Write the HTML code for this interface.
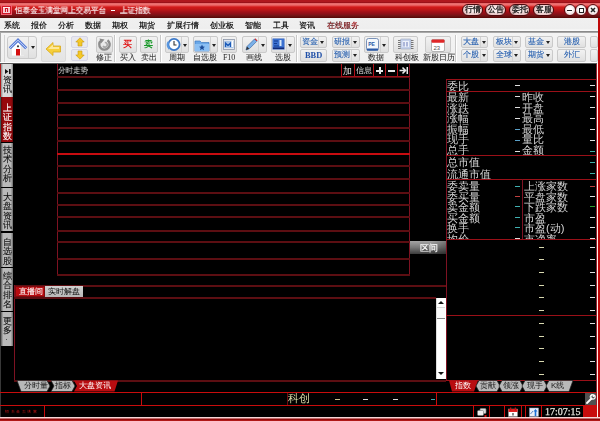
<!DOCTYPE html>
<html><head><meta charset="utf-8">
<style>
*{margin:0;padding:0;box-sizing:border-box}
html,body{width:600px;height:421px;overflow:hidden;background:#000;font-family:"Liberation Sans",sans-serif}
.t,.sbt,.rt,.lbl,.sb,.m,.pill{will-change:transform}
.a{position:absolute}
.t{position:absolute;white-space:nowrap;line-height:1}
/* title */
#title{left:0;top:0;width:600px;height:18px;background:linear-gradient(#b0181e 0,#b0181e 2px,#961018 2.6px,#f07474 3.6px,#ee6e6e 5px,#d41a1a 7px,#c41818 9px,#a01018 12px,#8a1018 14px,#6c1414 16px,#5a0808 17.4px,#5a0808 18px)}
#menu{left:0;top:18px;width:600px;height:13px;background:linear-gradient(#f0f0f0 0,#eeeeee 11px,#fafafa 12px)}
#tool{left:0;top:31px;width:600px;height:33px;background:linear-gradient(#8a8a8a 0,#8a8a8a 1px,#a8a8a8 1px,#a8a8a8 2px,#f4f4f4 2px,#efefef 100%)}
.m{font-size:7.6px;color:#000;top:22px;-webkit-text-stroke:0.15px #000}
.pill{position:absolute;top:4px;height:12px;width:21px;border-radius:6px;background:radial-gradient(ellipse at 50% 45%,#fbeeee 25%,#d8a4a4);border:1px solid #4a080c;font-size:8px;color:#111;text-align:center;line-height:10px;-webkit-text-stroke:0.25px #111}
.wc{position:absolute;top:4px;width:12px;height:12px;border-radius:50%;background:radial-gradient(circle at 50% 45%,#fff 30%,#e0b8b8);border:1px solid #5a0a0e}
.btn{position:absolute;background:linear-gradient(#f2f2f2,#e0e0e0);border:1px solid #cacaca;border-radius:2px}
.lbl{position:absolute;font-size:7.6px;color:#2c2c2c;white-space:nowrap;line-height:1;-webkit-text-stroke:0.05px #2c2c2c}
.sb{position:absolute;font-size:7.8px;color:#2a62b0;white-space:nowrap;line-height:1;-webkit-text-stroke:0.12px #2a62b0}
.dd{position:absolute;width:0;height:0;border-left:2.5px solid transparent;border-right:2.5px solid transparent;border-top:3px solid #222}
.sep{position:absolute;top:35px;width:1px;height:27px;background:#c8c8c8;box-shadow:1px 0 0 #fff}
/* sidebar */
.sbt{position:absolute;left:2px;width:11px;font-size:9.2px;line-height:9.3px;text-align:center;-webkit-text-stroke:0.1px currentColor}
.tab{position:absolute;left:1px;width:12px;background:linear-gradient(90deg,#9a9a9a,#cfcfcf 20%,#c8c8c8 80%,#8a8a8a);font-size:8.6px;color:#111;text-align:center;line-height:9.6px;padding-top:3px}
.hl{position:absolute;height:2px;background:#5c0e12}
.vl{position:absolute;width:1px;background:#7e1222}
.rt{position:absolute;font-size:11.2px;color:#d4d4d4;white-space:nowrap;line-height:10.5px}
.dash{position:absolute;width:5px;height:1px;background:#e0e0e0}
</style></head><body>
<!-- TITLE BAR -->
<div id="title" class="a">
  <div class="a" style="left:1px;top:5px;width:11px;height:10px;background:#d01828;border:1px solid #f06070"></div>
<div class="a" style="left:3px;top:7px;width:7px;height:1px;background:#fff0f0"></div>
<div class="a" style="left:3px;top:8px;width:2px;height:5px;background:#f8c8d0"></div>
<div class="a" style="left:6px;top:9px;width:1px;height:4px;background:#f8d0d8"></div>
<div class="a" style="left:8px;top:8px;width:2px;height:5px;background:#f8c0c8"></div>
<div class="a" style="left:3px;top:12px;width:7px;height:1px;background:#f8d0d8"></div>
  
  <div class="t" style="left:15px;top:7px;font-size:8px;color:#fff;transform:scaleX(0.95);transform-origin:0 0;-webkit-text-stroke:0.1px #fff">恒泰金玉满堂网上交易平台</div>
<div class="a" style="left:111px;top:10px;width:4px;height:1px;background:#fff"></div>
<div class="t" style="left:120px;top:7px;font-size:8px;color:#fff;transform:scaleX(0.95);transform-origin:0 0;-webkit-text-stroke:0.1px #fff">上证指数</div>
  <div class="pill" style="left:461.5px">行情</div>
  <div class="pill" style="left:485px">公告</div>
  <div class="pill" style="left:509px">委托</div>
  <div class="pill" style="left:533px">客服</div>
  <div class="wc" style="left:563.5px"><div class="a" style="left:2.5px;top:4.5px;width:5px;height:1.6px;background:#222"></div></div>
  <div class="wc" style="left:575px"><div class="a" style="left:2.5px;top:3px;width:5px;height:4.5px;border:1.2px solid #222;border-top-width:1.6px"></div></div>
  <div class="wc" style="left:586.5px"><svg class="a" style="left:1px;top:1px" width="8" height="8" viewBox="0 0 8 8"><path d="M2 2 L6 6 M6 2 L2 6" stroke="#222" stroke-width="1.5"/></svg></div>
</div>
<!-- MENU -->
<div id="menu" class="a"></div>
<div class="t m" style="left:4px">系统</div>
<div class="t m" style="left:31px">报价</div>
<div class="t m" style="left:58px">分析</div>
<div class="t m" style="left:85px">数据</div>
<div class="t m" style="left:112px">期权</div>
<div class="t m" style="left:139px">期货</div>
<div class="t m" style="left:167px">扩展行情</div>
<div class="t m" style="left:210px">创业板</div>
<div class="t m" style="left:245px">智能</div>
<div class="t m" style="left:273px">工具</div>
<div class="t m" style="left:299px">资讯</div>
<div class="t m" style="left:327px;color:#c0181e">在线服务</div>
<!-- TOOLBAR -->
<div id="tool" class="a"></div>
<div class="a" style="left:0;top:32px;width:1px;height:31px;background:#a8a8a8"></div>
<div class="a" style="left:0;top:62px;width:597px;height:1px;background:#fdfdfd"></div>
<div class="a" style="left:0;top:63px;width:597px;height:1px;background:#585858"></div>
<div class="a" style="left:4px;top:35px;width:1px;height:27px;background:#d4d4d4"></div>

<!-- home -->
<div class="btn" style="left:7px;top:36px;width:30px;height:23px;border-radius:3px"></div>
<div class="a" style="left:28px;top:37px;width:1px;height:21px;background:#cfcfcf"></div>
<svg class="a" style="left:8px;top:37px" width="20" height="20" viewBox="0 0 20 20">
 <path d="M4 10.5 L10 5.2 L16 10.5 V18.5 H4 Z" fill="#fff"/>
 <path d="M12.5 7.5 L16 10.5 V18.5 H13 Z" fill="#e4e4e4"/>
 <path d="M1.8 11.2 L10 3.2 L18.2 11.2" fill="none" stroke="#5a7ed8" stroke-width="3" stroke-linejoin="miter"/>
 <path d="M1.8 11.2 L10 3.2 L18.2 11.2" fill="none" stroke="#c4d4f8" stroke-width="1"/>
 <rect x="8" y="12" width="4" height="6.5" fill="#d41010"/>
 <circle cx="10" cy="9.3" r="1.1" fill="#3a3a3a"/>
</svg>
<div class="dd" style="left:30.5px;top:46px"></div>
<!-- back -->
<div class="btn" style="left:41px;top:36px;width:25px;height:26px;border-color:#dadada;background:linear-gradient(#ececec,#e4e4e4)"></div>
<svg class="a" style="left:45px;top:41px" width="17" height="16" viewBox="0 0 17 16">
 <path d="M1 8 L8 1.5 V5 H15.5 V11 H8 V14.5 Z" fill="#f6cf3a" stroke="#d8a81a" stroke-width="0.8" stroke-linejoin="round"/>
 <path d="M3 8 L8 3.5 V6 H14 V8 Z" fill="#fde89a"/>
</svg>
<!-- up/down -->
<div class="btn" style="left:71px;top:36px;width:17px;height:12px;border-color:#d6d6e6;background:#e8e8ee"></div>
<svg class="a" style="left:75px;top:37px" width="10" height="10" viewBox="0 0 10 10">
 <path d="M5 0.8 L9.2 5 H7 V9 H3 V5 H0.8 Z" fill="#f4c828" stroke="#c89810" stroke-width="0.6"/>
</svg>
<div class="btn" style="left:71px;top:49px;width:17px;height:12px;border-color:#d6d6e6;background:#e8e8ee"></div>
<svg class="a" style="left:75px;top:50px" width="10" height="10" viewBox="0 0 10 10">
 <path d="M5 9.2 L9.2 5 H7 V1 H3 V5 H0.8 Z" fill="#f4c828" stroke="#c89810" stroke-width="0.6"/>
</svg>
<!-- xiuzheng -->
<div class="btn" style="left:96px;top:36px;width:17px;height:17px"></div>
<svg class="a" style="left:97px;top:37px" width="15" height="15" viewBox="0 0 15 15">
 <path d="M10.5 3.2 A5.2 5.2 0 1 1 4.2 3.4" fill="none" stroke="#8c8c8c" stroke-width="2.4"/>
 <path d="M7.8 5.5 A2.3 2.3 0 1 1 6 9" fill="none" stroke="#a8a8a8" stroke-width="1.6"/>
 <path d="M2.5 1.5 L7.5 2.5 L4 6.5 Z" fill="#8c8c8c"/>
</svg>
<div class="lbl" style="left:96px;top:53.5px">修正</div>
<div class="sep" style="left:114px"></div>
<!-- buy sell -->
<div class="btn" style="left:119px;top:36px;width:18px;height:17px"></div>
<div class="t" style="left:123px;top:40px;font-size:9px;color:#e01818;font-weight:bold">买</div>
<div class="lbl" style="left:120px;top:53.5px">买入</div>
<div class="btn" style="left:140px;top:36px;width:18px;height:17px"></div>
<div class="t" style="left:144px;top:40px;font-size:9px;color:#1a9a2a;font-weight:bold">卖</div>
<div class="lbl" style="left:141px;top:53.5px">卖出</div>
<div class="sep" style="left:160px"></div>
<!-- zhouqi -->
<div class="btn" style="left:165px;top:36px;width:24px;height:17px"></div>
<div class="a" style="left:181px;top:37px;width:1px;height:15px;background:#d2d2d2"></div>
<svg class="a" style="left:166px;top:37px" width="15" height="15" viewBox="0 0 15 15">
 <circle cx="8" cy="7.5" r="5.6" fill="#fff" stroke="#3a78c8" stroke-width="1.8"/>
 <path d="M2.4 5 A6 6 0 0 0 3.5 12" fill="none" stroke="#5a98e0" stroke-width="2"/>
 <path d="M8 4 V8 H10.5" fill="none" stroke="#333" stroke-width="1.1"/>
</svg>
<div class="dd" style="left:183px;top:44px"></div>
<div class="lbl" style="left:169px;top:53.5px">周期</div>
<!-- zixuangu -->
<div class="btn" style="left:193px;top:36px;width:25px;height:17px"></div>
<div class="a" style="left:210px;top:37px;width:1px;height:15px;background:#d2d2d2"></div>
<svg class="a" style="left:194px;top:38px" width="16" height="14" viewBox="0 0 16 14">
 <path d="M1 3 H6 L7.5 4.5 H15 V13 H1 Z" fill="#6aa8e8" stroke="#3c78c0" stroke-width="0.7"/>
 <path d="M1 6 H15 V13 H1 Z" fill="#8cc0f4"/>
 <path d="M8 6.5 L8.9 8.6 L11 8.8 L9.4 10.1 L9.9 12.2 L8 11 L6.1 12.2 L6.6 10.1 L5 8.8 L7.1 8.6 Z" fill="#1c4c98"/>
</svg>
<div class="dd" style="left:212px;top:44px"></div>
<div class="lbl" style="left:193px;top:53.5px">自选股</div>
<!-- F10 -->
<div class="btn" style="left:221px;top:36px;width:16px;height:17px"></div>
<svg class="a" style="left:223px;top:39px" width="12" height="11" viewBox="0 0 12 11">
 <rect x="0.5" y="0.5" width="11" height="10" fill="#e4e8ee" stroke="#8a96a8" stroke-width="0.8"/>
 <rect x="1.5" y="2" width="9" height="7" fill="#a8c4e8"/>
 <path d="M2.5 8 V4 L5 6.5 L7.5 4 V8" stroke="#1a5ab8" stroke-width="1.3" fill="none"/>
 <rect x="8.5" y="2" width="1.5" height="6" fill="#fff"/>
</svg>
<div class="lbl" style="left:222.5px;top:54px;font-family:'Liberation Serif',serif;font-size:8px;letter-spacing:-0.1px;color:#333">F10</div>
<!-- huaxian -->
<div class="btn" style="left:242px;top:36px;width:25px;height:17px"></div>
<div class="a" style="left:258px;top:37px;width:1px;height:15px;background:#d2d2d2"></div>
<svg class="a" style="left:244px;top:37px" width="14" height="15" viewBox="0 0 14 15">
 <path d="M2 13 L3 9.5 L10.5 2 L12.8 4.3 L5.3 11.8 Z" fill="#7ab0e8" stroke="#3a68a8" stroke-width="0.7"/>
 <path d="M10.5 2 L12.8 4.3 L13.5 3.6 L11.2 1.3 Z" fill="#d02020"/>
 <path d="M2 13 L3 9.5 L5.3 11.8 Z" fill="#333"/>
</svg>
<div class="dd" style="left:261px;top:44px"></div>
<div class="lbl" style="left:246px;top:53.5px">画线</div>
<!-- xuangu -->
<div class="btn" style="left:271px;top:36px;width:24px;height:17px"></div>
<div class="a" style="left:286px;top:37px;width:1px;height:15px;background:#d2d2d2"></div>
<svg class="a" style="left:272px;top:38px" width="13" height="12" viewBox="0 0 13 12">
 <rect x="0.5" y="0.5" width="12" height="11" fill="#2a5ab8"/>
 <rect x="1" y="1" width="11" height="10" fill="#3a70d0"/>
 <path d="M2 3 H6 M2 5.5 H5 M2 8 H7" stroke="#123a90" stroke-width="1.2"/>
 <rect x="7.5" y="2" width="2" height="6" fill="#d8e8f8"/>
 <rect x="1" y="9.5" width="11" height="1.5" fill="#102a78"/>
</svg>
<div class="dd" style="left:288px;top:44px"></div>
<div class="lbl" style="left:275px;top:53.5px">选股</div>
<div class="sep" style="left:296px"></div>
<!-- zijin/bbd -->
<div class="btn" style="left:300px;top:36px;width:27px;height:12px"></div>
<div class="a" style="left:318px;top:37px;width:1px;height:10px;background:#d2d2d2"></div>
<div class="sb" style="left:302px;top:38px">资金</div>
<div class="dd" style="left:320px;top:41px"></div>
<div class="btn" style="left:300px;top:49px;width:27px;height:13px"></div>
<div class="sb" style="left:304.5px;top:51.5px;font-weight:bold;font-size:8.4px;color:#2050a8;font-family:'Liberation Serif',serif;-webkit-text-stroke:0">BBD</div>
<!-- yanbao/yuce -->
<div class="btn" style="left:332px;top:36px;width:28px;height:12px"></div>
<div class="a" style="left:351px;top:37px;width:1px;height:10px;background:#d2d2d2"></div>
<div class="sb" style="left:334px;top:38px">研报</div>
<div class="dd" style="left:353px;top:41px"></div>
<div class="btn" style="left:332px;top:49px;width:28px;height:13px"></div>
<div class="a" style="left:351px;top:50px;width:1px;height:11px;background:#d2d2d2"></div>
<div class="sb" style="left:334px;top:51px">预测</div>
<div class="dd" style="left:353px;top:54px"></div>
<!-- shuju -->
<div class="btn" style="left:364px;top:36px;width:25px;height:17px"></div>
<div class="a" style="left:380px;top:37px;width:1px;height:15px;background:#d2d2d2"></div>
<svg class="a" style="left:366px;top:38px" width="13" height="13" viewBox="0 0 13 13">
 <rect x="0.5" y="0.5" width="12" height="12" rx="2" fill="#f4f8fc" stroke="#5a78a8" stroke-width="0.8"/>
 <rect x="1" y="10.5" width="11" height="2" fill="#2a5aa8"/>
 <text x="2.2" y="8" font-size="5" font-family="Liberation Sans" font-weight="bold" fill="#2a5aa8">PE</text>
</svg>
<div class="dd" style="left:382px;top:44px"></div>
<div class="lbl" style="left:368px;top:53.5px">数据</div>
<!-- kechuang -->
<div class="btn" style="left:393px;top:36px;width:25px;height:17px"></div>
<svg class="a" style="left:397px;top:38px" width="17" height="12" viewBox="0 0 17 12">
 <rect x="3.5" y="1" width="10.5" height="10" rx="0.8" fill="#c4d0ea" stroke="#9aa4b8" stroke-width="0.6"/>
 <path d="M1 2.5H3.5M1 4.5H3.5M1 6.5H3.5M1 8.5H3.5M1 10.5H3.5M14 2.5H16.5M14 4.5H16.5M14 6.5H16.5M14 8.5H16.5M14 10.5H16.5" stroke="#6a6a6a" stroke-width="0.9"/>
 <rect x="5.5" y="3" width="6.5" height="6" fill="#eef2fa"/>
 <path d="M7 4 V8.5 M10 4 V8.5" stroke="#6a7ab8" stroke-width="1"/>
</svg>
<div class="lbl" style="left:395px;top:53.5px">科创板</div>
<!-- xingu rili -->
<div class="btn" style="left:425px;top:36px;width:26px;height:17px"></div>
<svg class="a" style="left:431px;top:38px" width="14" height="14" viewBox="0 0 14 14">
 <rect x="0.5" y="1.5" width="13" height="12" rx="1.5" fill="#fff" stroke="#9a9a9a" stroke-width="0.7"/>
 <rect x="0.5" y="1.5" width="13" height="3.2" rx="1" fill="#e02828"/>
 <text x="2.5" y="11.5" font-size="6" font-family="Liberation Sans" fill="#555">23</text>
</svg>
<div class="lbl" style="left:423px;top:53.5px">新股日历</div>
<div class="sep" style="left:455px"></div>
<!-- market buttons -->
<div class="btn" style="left:461px;top:36px;width:27px;height:12px"></div>
<div class="a" style="left:480px;top:37px;width:1px;height:10px;background:#d2d2d2"></div>
<div class="sb" style="left:463px;top:38px">大盘</div><div class="dd" style="left:481.5px;top:41px"></div>
<div class="btn" style="left:461px;top:49px;width:27px;height:13px"></div>
<div class="a" style="left:480px;top:50px;width:1px;height:11px;background:#d2d2d2"></div>
<div class="sb" style="left:463px;top:51px">个股</div><div class="dd" style="left:481.5px;top:54px"></div>
<div class="btn" style="left:493px;top:36px;width:28px;height:12px"></div>
<div class="a" style="left:512px;top:37px;width:1px;height:10px;background:#d2d2d2"></div>
<div class="sb" style="left:496px;top:38px">板块</div><div class="dd" style="left:514px;top:41px"></div>
<div class="btn" style="left:493px;top:49px;width:28px;height:13px"></div>
<div class="a" style="left:512px;top:50px;width:1px;height:11px;background:#d2d2d2"></div>
<div class="sb" style="left:496px;top:51px">全球</div><div class="dd" style="left:514px;top:54px"></div>
<div class="btn" style="left:525px;top:36px;width:28px;height:12px"></div>
<div class="sb" style="left:528px;top:38px">基金</div><div class="dd" style="left:546px;top:41px"></div>
<div class="btn" style="left:525px;top:49px;width:28px;height:13px"></div>
<div class="sb" style="left:528px;top:51px">期货</div><div class="dd" style="left:546px;top:54px"></div>
<div class="btn" style="left:557px;top:36px;width:29px;height:12px"></div>
<div class="sb" style="left:564px;top:38px">港股</div>
<div class="btn" style="left:557px;top:49px;width:29px;height:13px"></div>
<div class="sb" style="left:564px;top:51px">外汇</div>
<div class="btn" style="left:590px;top:36px;width:8px;height:12px"></div>
<div class="btn" style="left:590px;top:49px;width:8px;height:13px"></div>
<div class="a" style="left:598px;top:18px;width:2px;height:403px;background:#c00808"></div>
<div class="a" style="left:596px;top:64px;width:1px;height:353px;background:#902030"></div><div class="a" style="left:597px;top:64px;width:1px;height:353px;background:#fff0e8"></div>


<!-- left border -->
<div class="a" style="left:0;top:64px;width:1px;height:33px;background:#b01818"></div>
<div class="a" style="left:0;top:97px;width:1px;height:45px;background:#3a5858"></div>
<div class="a" style="left:0;top:142px;width:1px;height:279px;background:#383838"></div>
<!-- SIDEBAR -->
<div class="a" style="left:1px;top:64px;width:12px;height:33px;background:linear-gradient(90deg,#8a8a8a,#dcdcdc 18%,#d8d8d8 82%,#8a8a8a)"></div>
<div class="a" style="left:1px;top:97px;width:12px;height:45px;background:linear-gradient(90deg,#600606,#98080c 15%,#94080c 85%,#600606)"></div>
<div class="a" style="left:1px;top:143px;width:12px;height:44px;background:linear-gradient(90deg,#5a5a5a,#bababa 18%,#b8b8b8 82%,#6a6a6a)"></div>
<div class="a" style="left:1px;top:188px;width:12px;height:43px;background:linear-gradient(90deg,#5a5a5a,#bababa 18%,#b8b8b8 82%,#6a6a6a)"></div>
<div class="a" style="left:1px;top:233px;width:12px;height:34px;background:linear-gradient(90deg,#5a5a5a,#bababa 18%,#b8b8b8 82%,#6a6a6a)"></div>
<div class="a" style="left:1px;top:268px;width:12px;height:43px;background:linear-gradient(90deg,#5a5a5a,#bababa 18%,#b8b8b8 82%,#6a6a6a)"></div>
<div class="a" style="left:1px;top:312px;width:12px;height:34px;background:linear-gradient(90deg,#5a5a5a,#bababa 18%,#b8b8b8 82%,#6a6a6a)"></div>
<div class="sbt" style="top:76px;color:#111">资<br>讯</div>
<div class="sbt" style="top:103.5px;color:#fff">上<br>证<br>指<br>数</div>
<div class="sbt" style="top:146px;color:#111">技<br>术<br>分<br>析</div>
<div class="sbt" style="top:192.5px;color:#111">大<br>盘<br>资<br>讯</div>
<div class="sbt" style="top:238px;color:#111">自<br>选<br>股</div>
<div class="sbt" style="top:272.3px;color:#111">综<br>合<br>排<br>名</div>
<div class="sbt" style="top:316.7px;color:#111">更<br>多</div>
<svg class="a" style="left:4.5px;top:68.5px" width="6" height="5" viewBox="0 0 6 5"><path d="M0 0 L3.5 2.5 L0 5 Z" fill="#111"/><rect x="4" y="0" width="1.6" height="5" fill="#111"/></svg>
<div class="a" style="left:6px;top:339px;width:1px;height:1px;background:#555"></div>
<!-- CHART -->
<div class="vl" style="left:57px;top:64px;height:211px"></div>
<div class="vl" style="left:409px;top:64px;height:211px"></div>
<div class="t" style="left:58px;top:66.5px;font-size:8px;color:#e0e0e0;transform:scaleX(0.94);transform-origin:0 0">分时走势</div>
<div class="a" style="left:341px;top:64px;width:1px;height:13px;background:#b01018"></div>
<div class="a" style="left:354px;top:64px;width:1px;height:13px;background:#b01018"></div>
<div class="a" style="left:373px;top:64px;width:1px;height:13px;background:#b01018"></div>
<div class="a" style="left:385px;top:64px;width:1px;height:13px;background:#b01018"></div>
<div class="a" style="left:397px;top:64px;width:1px;height:13px;background:#b01018"></div>
<div class="t" style="left:343px;top:66.5px;font-size:8.6px;color:#e0e0e0">加</div>
<div class="t" style="left:355.5px;top:66.5px;font-size:8.2px;color:#e0e0e0">信息</div>
<div class="a" style="left:376px;top:69.5px;width:7px;height:2px;background:#e8e8e8"></div>
<div class="a" style="left:378.5px;top:67px;width:2px;height:7px;background:#e8e8e8"></div>
<div class="a" style="left:388px;top:69.5px;width:7px;height:2px;background:#e8e8e8"></div>
<svg class="a" style="left:399px;top:66px" width="10" height="9" viewBox="0 0 10 9"><path d="M0.5 4.5 H6 M3.5 1.5 L6.5 4.5 L3.5 7.5" stroke="#e8e8e8" stroke-width="1.6" fill="none"/><rect x="7.5" y="1" width="1.5" height="7" fill="#e8e8e8"/></svg>
<div class="hl" style="left:57px;top:76px;width:353px"></div><div class="a" style="left:341px;top:76px;width:69px;height:1px;background:#a01018"></div>
<div class="hl" style="left:57px;top:89px;width:353px"></div>
<div class="hl" style="left:57px;top:102px;width:353px"></div>
<div class="hl" style="left:57px;top:114px;width:353px"></div>
<div class="hl" style="left:57px;top:127px;width:353px"></div>
<div class="hl" style="left:57px;top:140px;width:353px"></div>
<div class="a" style="left:57px;top:153px;width:353px;height:2px;background:#c80c10"></div>
<div class="hl" style="left:57px;top:165px;width:353px"></div>
<div class="hl" style="left:57px;top:178px;width:353px"></div>
<div class="hl" style="left:57px;top:192px;width:353px"></div>
<div class="hl" style="left:57px;top:204px;width:353px"></div>
<div class="hl" style="left:57px;top:216px;width:353px"></div>
<div class="hl" style="left:57px;top:230px;width:353px"></div>
<div class="hl" style="left:57px;top:241px;width:353px"></div>
<div class="hl" style="left:57px;top:258px;width:353px"></div>
<div class="hl" style="left:57px;top:274px;width:353px"></div>
<!-- qujian button -->
<div class="a" style="left:410px;top:241px;width:36px;height:13px;background:linear-gradient(90deg,rgba(0,0,0,0) 60%,rgba(0,0,0,0.25)),linear-gradient(#a4a4a4,#787878 50%,#3c3c3c)"></div>
<div class="t" style="left:419.5px;top:243.5px;font-size:8.6px;color:#fff;-webkit-text-stroke:0.15px #fff">区间</div>
<!-- RIGHT PANEL -->
<div class="vl" style="left:446px;top:79px;height:302px"></div>
<div class="a" style="left:446px;top:79px;width:150px;height:1px;background:#9a1018"></div>
<div class="a" style="left:446px;top:91px;width:150px;height:1px;background:#9a1018"></div>
<div class="a" style="left:446px;top:155px;width:150px;height:1px;background:#9a1018"></div>
<div class="a" style="left:446px;top:179px;width:150px;height:1px;background:#9a1018"></div>
<div class="a" style="left:446px;top:239px;width:150px;height:1px;background:#9a1018"></div>
<div class="a" style="left:446px;top:315px;width:150px;height:1px;background:#9a1018"></div>
<div class="a" style="left:446px;top:380px;width:150px;height:1px;background:#9a1018"></div>
<div class="vl" style="left:522px;top:179px;height:60px"></div>
<div class="a" style="left:446px;top:80px;width:150px;height:11px;overflow:hidden">
 <div class="rt" style="left:1px;top:0.5px">委比</div></div>
<div class="a" style="left:446px;top:92px;width:150px;height:63px;overflow:hidden">
 <div class="rt" style="left:1px;top:0px;line-height:10.5px">最新<br>涨跌<br>涨幅<br>振幅<br>现手<br>总手</div>
 <div class="rt" style="left:76px;top:0px;line-height:10.5px">昨收<br>开盘<br>最高<br>最低<br>量比<br>金额</div>
</div>
<div class="a" style="left:446px;top:156px;width:150px;height:23px;overflow:hidden">
 <div class="rt" style="left:1px;top:1px;line-height:11.5px">总市值<br>流通市值</div></div>
<div class="a" style="left:446px;top:180px;width:76px;height:59px;overflow:hidden">
 <div class="rt" style="left:1px;top:0.5px;line-height:10.5px">委卖量<br>委买量<br>卖金额<br>买金额<br>换手<br>均价</div></div>
<div class="a" style="left:523px;top:180px;width:73px;height:59px;overflow:hidden">
 <div class="rt" style="left:1px;top:0.5px;line-height:10.5px">上涨家数<br>平盘家数<br>下跌家数<br>市盈<br>市盈(动)<br>市净率</div></div>
<div class="dash" style="left:515px;top:85px;width:5px;background:#e0e0e0"></div>
<div class="dash" style="left:590px;top:85px;width:5px;background:#e0e0e0"></div>
<div class="dash" style="left:515px;top:96px;width:5px;background:#e0e0e0"></div>
<div class="dash" style="left:590px;top:96px;width:5px;background:#e0e0e0"></div>
<div class="dash" style="left:515px;top:107px;width:5px;background:#e0e0e0"></div>
<div class="dash" style="left:590px;top:107px;width:5px;background:#e0e0e0"></div>
<div class="dash" style="left:515px;top:118px;width:5px;background:#e0e0e0"></div>
<div class="dash" style="left:590px;top:118px;width:5px;background:#e0e0e0"></div>
<div class="dash" style="left:515px;top:129px;width:5px;background:#5aa0c8"></div>
<div class="dash" style="left:590px;top:129px;width:5px;background:#e0e0e0"></div>
<div class="dash" style="left:515px;top:140px;width:5px;background:#5aa0c8"></div>
<div class="dash" style="left:590px;top:140px;width:5px;background:#e0e0e0"></div>
<div class="dash" style="left:515px;top:151px;width:5px;background:#e0e0e0"></div>
<div class="dash" style="left:590px;top:151px;width:5px;background:#40b0a8"></div>
<div class="dash" style="left:590px;top:162px;width:5px;background:#40b0a8"></div>
<div class="dash" style="left:590px;top:173px;width:5px;background:#40b0a8"></div>
<div class="dash" style="left:515px;top:186px;width:5px;background:#40b0b0"></div>
<div class="dash" style="left:590px;top:186px;width:5px;background:#c04040"></div>
<div class="dash" style="left:515px;top:196px;width:5px;background:#c04040"></div>
<div class="dash" style="left:590px;top:196px;width:5px;background:#e0e0e0"></div>
<div class="dash" style="left:515px;top:206px;width:5px;background:#40b0b0"></div>
<div class="dash" style="left:590px;top:206px;width:5px;background:#30a030"></div>
<div class="dash" style="left:515px;top:217px;width:5px;background:#40b0b0"></div>
<div class="dash" style="left:590px;top:217px;width:5px;background:#e0e0e0"></div>
<div class="dash" style="left:515px;top:227px;width:5px;background:#40b0b0"></div>
<div class="dash" style="left:590px;top:227px;width:5px;background:#e0e0e0"></div>
<div class="dash" style="left:515px;top:238px;width:5px;background:#e0e0e0"></div>
<div class="dash" style="left:590px;top:238px;width:5px;background:#e0e0e0"></div>
<div class="dash" style="left:539px;top:247px;width:5px;background:#d8d8b0"></div>
<div class="dash" style="left:590px;top:247px;width:5px;background:#e0e0e0"></div>
<div class="dash" style="left:539px;top:259px;width:5px;background:#d8d8b0"></div>
<div class="dash" style="left:590px;top:259px;width:5px;background:#e0e0e0"></div>
<div class="dash" style="left:539px;top:272px;width:5px;background:#d8d8b0"></div>
<div class="dash" style="left:590px;top:272px;width:5px;background:#e0e0e0"></div>
<div class="dash" style="left:539px;top:285px;width:5px;background:#d8d8b0"></div>
<div class="dash" style="left:590px;top:285px;width:5px;background:#e0e0e0"></div>
<div class="dash" style="left:539px;top:297px;width:5px;background:#d8d8b0"></div>
<div class="dash" style="left:590px;top:297px;width:5px;background:#e0e0e0"></div>
<div class="dash" style="left:539px;top:310px;width:5px;background:#d8d8b0"></div>
<div class="dash" style="left:590px;top:310px;width:5px;background:#e0e0e0"></div>
<div class="dash" style="left:539px;top:323px;width:5px;background:#d8d8b0"></div>
<div class="dash" style="left:590px;top:323px;width:5px;background:#e0e0e0"></div>
<div class="dash" style="left:539px;top:336px;width:5px;background:#d8d8b0"></div>
<div class="dash" style="left:590px;top:336px;width:5px;background:#e0e0e0"></div>
<div class="dash" style="left:539px;top:348px;width:5px;background:#d8d8b0"></div>
<div class="dash" style="left:590px;top:348px;width:5px;background:#e0e0e0"></div>
<div class="dash" style="left:539px;top:361px;width:5px;background:#d8d8b0"></div>
<div class="dash" style="left:590px;top:361px;width:5px;background:#e0e0e0"></div>
<div class="dash" style="left:539px;top:374px;width:5px;background:#d8d8b0"></div>
<div class="dash" style="left:590px;top:374px;width:5px;background:#e0e0e0"></div>

<!-- right tabs -->
<svg class="a" style="left:440px;top:380px" width="140" height="12" viewBox="0 0 140 12">
 <path d="M9 0.5 H38 L34 11.5 H12 Z" fill="#b80c10"/>
 <path d="M39 0.5 H57 L60 6 L57 11.5 H39 L36 6 Z" fill="#b8b8b8" stroke="#202020" stroke-width="0.7"/>
 <path d="M62 0.5 H80 L83 6 L80 11.5 H62 L59 6 Z" fill="#b8b8b8" stroke="#202020" stroke-width="0.7"/>
 <path d="M85 0.5 H104 L107 6 L104 11.5 H85 L82 6 Z" fill="#b8b8b8" stroke="#202020" stroke-width="0.7"/>
 <path d="M109 0.5 H133 L129 11.5 H109 L106 6 Z" fill="#b8b8b8" stroke="#202020" stroke-width="0.7"/>
</svg>
<div class="t" style="left:455px;top:382px;font-size:8px;color:#fff">指数</div>
<div class="t" style="left:480px;top:382px;font-size:8px;color:#1a1a1a">贡献</div>
<div class="t" style="left:503px;top:382px;font-size:8px;color:#1a1a1a">领涨</div>
<div class="t" style="left:527px;top:382px;font-size:8px;color:#1a1a1a">现手</div>
<div class="t" style="left:551px;top:382px;font-size:8px;color:#1a1a1a">K线</div>
<!-- NEWS PANEL -->
<div class="hl" style="left:14px;top:285px;width:432px"></div>
<div class="vl" style="left:14px;top:285px;height:96px"></div>
<div class="hl" style="left:14px;top:380px;width:432px"></div>
<div class="a" style="left:15px;top:286px;width:30px;height:11px;background:#b80c10;border:1px solid #800a0e"></div>
<div class="t" style="left:18.5px;top:287.5px;font-size:8.2px;color:#f8e8e8;-webkit-text-stroke:0.1px #fff">直播间</div>
<div class="a" style="left:45px;top:286px;width:38px;height:11px;background:linear-gradient(#d0d0d0,#b8b8b8)"></div>
<div class="t" style="left:47.5px;top:287.5px;font-size:8.2px;color:#111">实时解盘</div>
<div class="hl" style="left:14px;top:297px;width:422px"></div>
<div class="a" style="left:436px;top:298px;width:10px;height:81px;background:#fff;border-left:1px solid #ddd"></div>
<div class="a" style="left:438px;top:301px;width:0;height:0;border-left:3px solid transparent;border-right:3px solid transparent;border-bottom:3px solid #111"></div>
<div class="a" style="left:437px;top:307px;width:8px;height:12px;background:#fafafa;border-top:1px solid #d8d8d8;border-bottom:1px solid #888"></div>
<div class="a" style="left:438px;top:372px;width:0;height:0;border-left:3px solid transparent;border-right:3px solid transparent;border-top:3px solid #111"></div>
<!-- news tabs -->
<svg class="a" style="left:10px;top:380px" width="120" height="12" viewBox="0 0 120 12">
 <path d="M7 0.5 H37 L40 6 L37 11.5 H11 Z" fill="#b8b8b8" stroke="#202020" stroke-width="0.7"/>
 <path d="M41 0.5 H62 L65 6 L62 11.5 H41 L44 6 Z" fill="#b8b8b8" stroke="#202020" stroke-width="0.7"/>
 <path d="M64 0.5 H108 L104.5 11.5 H64 L67 6 Z" fill="#b80c10"/>
</svg>
<div class="t" style="left:24px;top:382px;font-size:8px;color:#1a1a1a">分时量</div>
<div class="t" style="left:55px;top:382px;font-size:8px;color:#1a1a1a">指标</div>
<div class="t" style="left:79px;top:382px;font-size:8px;color:#fff">大盘资讯</div>
<!-- bottom bars -->
<div class="a" style="left:0;top:392px;width:597px;height:1px;background:#c80c0c"></div>
<div class="a" style="left:0;top:405px;width:597px;height:1px;background:#c80c0c"></div>
<div class="a" style="left:141px;top:393px;width:1px;height:12px;background:#c80c0c"></div>
<div class="a" style="left:287px;top:393px;width:1px;height:12px;background:#6a0c10"></div>
<div class="a" style="left:436px;top:393px;width:1px;height:12px;background:#c80c0c"></div>
<div class="t" style="left:288px;top:393px;font-size:11px;color:#d8dca8">科创</div>
<div class="a" style="left:335px;top:399px;width:5px;height:1px;background:#c8c090"></div>
<div class="a" style="left:363px;top:399px;width:5px;height:1px;background:#d8d8d8"></div>
<div class="a" style="left:393px;top:399px;width:5px;height:1px;background:#d8d8d8"></div>
<div class="a" style="left:431px;top:399px;width:4px;height:1px;background:#40a8b0"></div>
<div class="a" style="left:44px;top:406px;width:1px;height:11px;background:#c80c0c"></div>
<div class="a" style="left:473px;top:406px;width:1px;height:11px;background:#c80c0c"></div>
<div class="a" style="left:489px;top:406px;width:1px;height:11px;background:#c80c0c"></div>
<div class="a" style="left:504px;top:406px;width:1px;height:11px;background:#c80c0c"></div>
<div class="a" style="left:521px;top:406px;width:1px;height:11px;background:#c80c0c"></div>
<div class="a" style="left:525px;top:406px;width:1px;height:11px;background:#c80c0c"></div>
<div class="a" style="left:541px;top:406px;width:1px;height:11px;background:#c80c0c"></div>
<div class="a" style="left:583px;top:406px;width:14px;height:11px;background:#c80c0c"></div>
<svg class="a" style="left:477px;top:408px" width="10" height="9" viewBox="0 0 10 9">
 <rect x="3" y="0.5" width="6" height="5" rx="1" fill="#ddd" stroke="#888" stroke-width="0.6"/>
 <rect x="0.5" y="2.5" width="6" height="5" rx="1" fill="#f0f0f0" stroke="#777" stroke-width="0.6"/>
 <rect x="7.5" y="7" width="2" height="2" fill="#d01010"/>
</svg>
<svg class="a" style="left:508px;top:407px" width="10" height="10" viewBox="0 0 10 10">
 <rect x="0.5" y="2" width="9" height="7.5" fill="#fff" stroke="#999" stroke-width="0.5"/>
 <rect x="0.5" y="2" width="9" height="3" fill="#e02020"/>
 <rect x="2" y="0.5" width="1.3" height="3" fill="#c01010"/><rect x="6.7" y="0.5" width="1.3" height="3" fill="#c01010"/>
 <rect x="4" y="6" width="2" height="2.5" fill="#888"/>
</svg>
<svg class="a" style="left:529px;top:407px" width="10" height="10" viewBox="0 0 10 10">
 <rect x="0.5" y="1" width="9" height="8.5" fill="#e8eef8" stroke="#8898b8" stroke-width="0.5"/>
 <path d="M6.5 2 L8.5 4.5 H7.3 V9 H5.7 V4.5 H4.5 Z" fill="#1a70d8"/>
 <path d="M1.5 7 L4 4" stroke="#5a88c8" stroke-width="1"/>
</svg>
<div class="a" style="left:585px;top:393px;width:11px;height:12px;background:#505050"></div>
<svg class="a" style="left:586px;top:394px" width="10" height="10" viewBox="0 0 10 10">
 <path d="M1 9 L5.5 4.5" stroke="#fff" stroke-width="1.8" stroke-linecap="round"/>
 <path d="M5 5 A2.6 2.6 0 1 1 8.8 2.2 L7.2 3.2 L6.5 2.2 L7.6 0.8 A2.6 2.6 0 0 0 5 5 Z" fill="#fff"/>
 <circle cx="7" cy="3" r="2.2" fill="none" stroke="#fff" stroke-width="1.2"/>
</svg>
<div class="t" style="left:5px;top:409.5px;font-size:4px;color:#e81818;letter-spacing:1.6px;transform:scaleY(0.8);transform-origin:0 0">恒泰金玉满堂</div>
<div class="t" style="left:545px;top:406.5px;font-size:10px;color:#e0e0d8;font-family:'Liberation Serif',serif;-webkit-text-stroke:0.25px #e0e0d8">17:07:15</div>
<div class="a" style="left:0;top:417px;width:600px;height:1px;background:#f6d6d6"></div>
<div class="a" style="left:0;top:418px;width:600px;height:1px;background:#c06a6a"></div>
<div class="a" style="left:0;top:419px;width:600px;height:1px;background:#900808"></div>
<div class="a" style="left:0;top:420px;width:600px;height:1px;background:#b01818"></div>
</body></html>
